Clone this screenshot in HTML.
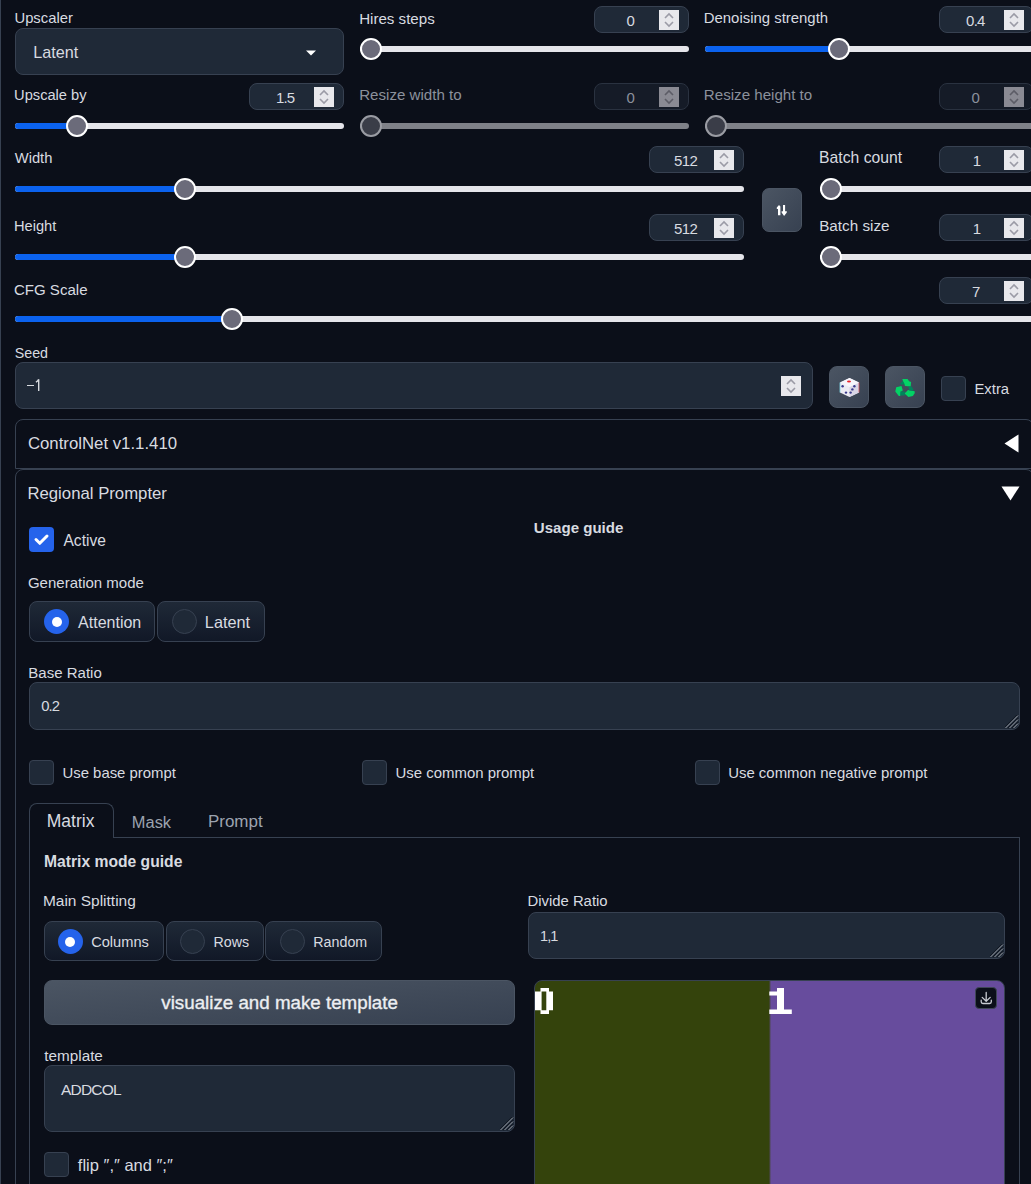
<!DOCTYPE html>
<html><head><meta charset="utf-8"><style>
html,body{margin:0;padding:0;width:1031px;height:1184px;overflow:hidden;background:#0b0f19;font-family:"Liberation Sans",sans-serif;}
</style></head><body>
<div style="position:absolute;left:0;top:0;width:1px;height:1184px;background:#374151"></div>
<div style="position:absolute;left:14.46px;top:11.37px;font-size:14.8px;line-height:14.8px;font-weight:normal;color:#d8dbe0;white-space:pre;letter-spacing:0px;transform:scaleY(1.0);transform-origin:0 12.53px;">Upscaler</div>
<div style="position:absolute;left:15px;top:28px;width:329px;height:47px;background:#1f2937;border:1px solid #374151;border-radius:8px;box-sizing:border-box;"></div>
<div style="position:absolute;left:33.17px;top:44.09px;font-size:16.2px;line-height:16.2px;font-weight:normal;color:#d8dbe0;white-space:pre;letter-spacing:0px;transform:scaleY(1.0);transform-origin:0 13.71px;">Latent</div>
<svg style="position:absolute;left:305px;top:50px" width="12" height="7" viewBox="0 0 12 7"><path d="M1 0.5 L11 0.5 L6 5.5 Z" fill="#fff"/></svg>
<div style="position:absolute;left:14.07px;top:88.18px;font-size:14.67px;line-height:14.67px;font-weight:normal;color:#d8dbe0;white-space:pre;letter-spacing:0px;transform:scaleY(1.0);transform-origin:0 12.42px;">Upscale by</div>
<div style="position:absolute;left:249px;top:83px;width:95px;height:27px;background:#1f2937;border:1px solid #374151;border-radius:8px;box-sizing:border-box;"></div>
<div style="position:absolute;left:276.06px;top:89.90px;font-size:15.0px;line-height:15.0px;font-weight:normal;color:#d8dbe0;white-space:pre;letter-spacing:-0.94px;transform:scaleY(1.0);transform-origin:0 12.70px;">1.5</div>
<svg style="position:absolute;left:314px;top:87px" width="20" height="20" viewBox="0 0 20 20"><rect width="20" height="20" fill="#e8e8ec"/><path d="M6 8 L10 4 L14 8 M6 12 L10 16 L14 12" fill="none" stroke="#9b9ba6" stroke-width="1.6"/></svg>
<div style="position:absolute;left:15px;top:123px;width:329px;height:6px;background:#e5e5ea;border-radius:3px"></div>
<div style="position:absolute;left:15px;top:123px;width:62px;height:6px;background:#0b62ee;border-radius:3px 0 0 3px"></div>
<div style="position:absolute;left:66px;top:115px;width:22px;height:22px;background:#6b6b7a;border:2px solid #ffffff;border-radius:50%;box-sizing:border-box"></div>
<div style="position:absolute;left:359.16px;top:10.51px;font-size:15.11px;line-height:15.11px;font-weight:normal;color:#d8dbe0;white-space:pre;letter-spacing:0px;transform:scaleY(1.0);transform-origin:0 12.79px;">Hires steps</div>
<div style="position:absolute;left:594px;top:6px;width:95px;height:27px;background:#1f2937;border:1px solid #374151;border-radius:8px;box-sizing:border-box;"></div>
<div style="position:absolute;left:626.42px;top:12.90px;font-size:15.0px;line-height:15.0px;font-weight:normal;color:#d8dbe0;white-space:pre;letter-spacing:0px;transform:scaleY(1.0);transform-origin:0 12.70px;">0</div>
<svg style="position:absolute;left:659px;top:10px" width="20" height="20" viewBox="0 0 20 20"><rect width="20" height="20" fill="#e8e8ec"/><path d="M6 8 L10 4 L14 8 M6 12 L10 16 L14 12" fill="none" stroke="#9b9ba6" stroke-width="1.6"/></svg>
<div style="position:absolute;left:360px;top:46px;width:329px;height:6px;background:#e5e5ea;border-radius:3px"></div>
<div style="position:absolute;left:360px;top:38px;width:22px;height:22px;background:#6b6b7a;border:2px solid #ffffff;border-radius:50%;box-sizing:border-box"></div>
<div style="position:absolute;left:359.16px;top:87.19px;font-size:15.13px;line-height:15.13px;font-weight:normal;color:#8b919c;white-space:pre;letter-spacing:0px;transform:scaleY(1.0);transform-origin:0 12.81px;">Resize width to</div>
<div style="position:absolute;left:594px;top:83px;width:95px;height:27px;background:#151b27;border:1px solid #2a3240;border-radius:8px;box-sizing:border-box;"></div>
<div style="position:absolute;left:626.42px;top:89.90px;font-size:15.0px;line-height:15.0px;font-weight:normal;color:#8b919c;white-space:pre;letter-spacing:0px;transform:scaleY(1.0);transform-origin:0 12.70px;">0</div>
<svg style="position:absolute;left:659px;top:87px" width="20" height="20" viewBox="0 0 20 20"><rect width="20" height="20" fill="#8a8a93"/><path d="M6 8 L10 4 L14 8 M6 12 L10 16 L14 12" fill="none" stroke="#5c5c66" stroke-width="1.6"/></svg>
<div style="position:absolute;left:360px;top:123px;width:329px;height:6px;background:#7f8188;border-radius:3px"></div>
<div style="position:absolute;left:360px;top:115px;width:22px;height:22px;background:#3a3d48;border:2px solid #9a9ca3;border-radius:50%;box-sizing:border-box"></div>
<div style="position:absolute;left:703.78px;top:11.17px;font-size:14.92px;line-height:14.92px;font-weight:normal;color:#d8dbe0;white-space:pre;letter-spacing:0px;transform:scaleY(1.0);transform-origin:0 12.63px;">Denoising strength</div>
<div style="position:absolute;left:939px;top:6px;width:95px;height:27px;background:#1f2937;border:1px solid #374151;border-radius:8px;box-sizing:border-box;"></div>
<div style="position:absolute;left:966.11px;top:12.90px;font-size:15.0px;line-height:15.0px;font-weight:normal;color:#d8dbe0;white-space:pre;letter-spacing:-0.81px;transform:scaleY(1.0);transform-origin:0 12.70px;">0.4</div>
<svg style="position:absolute;left:1004px;top:10px" width="20" height="20" viewBox="0 0 20 20"><rect width="20" height="20" fill="#e8e8ec"/><path d="M6 8 L10 4 L14 8 M6 12 L10 16 L14 12" fill="none" stroke="#9b9ba6" stroke-width="1.6"/></svg>
<div style="position:absolute;left:705px;top:46px;width:329px;height:6px;background:#e5e5ea;border-radius:3px"></div>
<div style="position:absolute;left:705px;top:46px;width:134px;height:6px;background:#0b62ee;border-radius:3px 0 0 3px"></div>
<div style="position:absolute;left:828px;top:38px;width:22px;height:22px;background:#6b6b7a;border:2px solid #ffffff;border-radius:50%;box-sizing:border-box"></div>
<div style="position:absolute;left:703.86px;top:87.11px;font-size:15.11px;line-height:15.11px;font-weight:normal;color:#8b919c;white-space:pre;letter-spacing:0px;transform:scaleY(1.0);transform-origin:0 12.79px;">Resize height to</div>
<div style="position:absolute;left:939px;top:83px;width:95px;height:27px;background:#151b27;border:1px solid #2a3240;border-radius:8px;box-sizing:border-box;"></div>
<div style="position:absolute;left:971.42px;top:89.90px;font-size:15.0px;line-height:15.0px;font-weight:normal;color:#8b919c;white-space:pre;letter-spacing:0px;transform:scaleY(1.0);transform-origin:0 12.70px;">0</div>
<svg style="position:absolute;left:1004px;top:87px" width="20" height="20" viewBox="0 0 20 20"><rect width="20" height="20" fill="#8a8a93"/><path d="M6 8 L10 4 L14 8 M6 12 L10 16 L14 12" fill="none" stroke="#5c5c66" stroke-width="1.6"/></svg>
<div style="position:absolute;left:705px;top:123px;width:329px;height:6px;background:#7f8188;border-radius:3px"></div>
<div style="position:absolute;left:705px;top:115px;width:22px;height:22px;background:#3a3d48;border:2px solid #9a9ca3;border-radius:50%;box-sizing:border-box"></div>
<div style="position:absolute;left:14.73px;top:151.41px;font-size:14.76px;line-height:14.76px;font-weight:normal;color:#d8dbe0;white-space:pre;letter-spacing:0px;transform:scaleY(1.0);transform-origin:0 12.49px;">Width</div>
<div style="position:absolute;left:649px;top:146px;width:95px;height:27px;background:#1f2937;border:1px solid #374151;border-radius:8px;box-sizing:border-box;"></div>
<div style="position:absolute;left:674.0px;top:152.90px;font-size:15.0px;line-height:15.0px;font-weight:normal;color:#d8dbe0;white-space:pre;letter-spacing:-0.63px;transform:scaleY(1.0);transform-origin:0 12.70px;">512</div>
<svg style="position:absolute;left:714px;top:150px" width="20" height="20" viewBox="0 0 20 20"><rect width="20" height="20" fill="#e8e8ec"/><path d="M6 8 L10 4 L14 8 M6 12 L10 16 L14 12" fill="none" stroke="#9b9ba6" stroke-width="1.6"/></svg>
<div style="position:absolute;left:15px;top:186px;width:729px;height:6px;background:#e5e5ea;border-radius:3px"></div>
<div style="position:absolute;left:15px;top:186px;width:170px;height:6px;background:#0b62ee;border-radius:3px 0 0 3px"></div>
<div style="position:absolute;left:174px;top:178px;width:22px;height:22px;background:#6b6b7a;border:2px solid #ffffff;border-radius:50%;box-sizing:border-box"></div>
<div style="position:absolute;left:13.9px;top:219.38px;font-size:14.67px;line-height:14.67px;font-weight:normal;color:#d8dbe0;white-space:pre;letter-spacing:0px;transform:scaleY(1.0);transform-origin:0 12.42px;">Height</div>
<div style="position:absolute;left:649px;top:214px;width:95px;height:27px;background:#1f2937;border:1px solid #374151;border-radius:8px;box-sizing:border-box;"></div>
<div style="position:absolute;left:674.0px;top:220.90px;font-size:15.0px;line-height:15.0px;font-weight:normal;color:#d8dbe0;white-space:pre;letter-spacing:-0.63px;transform:scaleY(1.0);transform-origin:0 12.70px;">512</div>
<svg style="position:absolute;left:714px;top:218px" width="20" height="20" viewBox="0 0 20 20"><rect width="20" height="20" fill="#e8e8ec"/><path d="M6 8 L10 4 L14 8 M6 12 L10 16 L14 12" fill="none" stroke="#9b9ba6" stroke-width="1.6"/></svg>
<div style="position:absolute;left:15px;top:253.5px;width:729px;height:6px;background:#e5e5ea;border-radius:3px"></div>
<div style="position:absolute;left:15px;top:253.5px;width:170px;height:6px;background:#0b62ee;border-radius:3px 0 0 3px"></div>
<div style="position:absolute;left:174px;top:245.5px;width:22px;height:22px;background:#6b6b7a;border:2px solid #ffffff;border-radius:50%;box-sizing:border-box"></div>
<div style="position:absolute;left:762px;top:188px;width:40px;height:44px;background:linear-gradient(to bottom right,#4b5563,#374151);border:1px solid #4b5563;border-radius:7px;box-sizing:border-box"></div>
<svg style="position:absolute;left:772px;top:200px" width="20" height="20" viewBox="0 0 20 20"><path fill="#fff" d="M6 15.2 V9 H4.8 V7.6 L7 5 L8.4 6.6 V15.2 Z M11 5 H13.1 V11.2 H14.8 V12.4 L12.1 16 L9.6 12.4 V11.2 H11 Z"/></svg>
<div style="position:absolute;left:819.11px;top:150.49px;font-size:15.72px;line-height:15.72px;font-weight:normal;color:#d8dbe0;white-space:pre;letter-spacing:0px;transform:scaleY(1.0);transform-origin:0 13.31px;">Batch count</div>
<div style="position:absolute;left:939px;top:146px;width:95px;height:27px;background:#1f2937;border:1px solid #374151;border-radius:8px;box-sizing:border-box;"></div>
<div style="position:absolute;left:972.81px;top:152.90px;font-size:15.0px;line-height:15.0px;font-weight:normal;color:#d8dbe0;white-space:pre;letter-spacing:0px;transform:scaleY(1.0);transform-origin:0 12.70px;">1</div>
<svg style="position:absolute;left:1004px;top:150px" width="20" height="20" viewBox="0 0 20 20"><rect width="20" height="20" fill="#e8e8ec"/><path d="M6 8 L10 4 L14 8 M6 12 L10 16 L14 12" fill="none" stroke="#9b9ba6" stroke-width="1.6"/></svg>
<div style="position:absolute;left:820px;top:186px;width:214px;height:6px;background:#e5e5ea;border-radius:3px"></div>
<div style="position:absolute;left:820px;top:178px;width:22px;height:22px;background:#6b6b7a;border:2px solid #ffffff;border-radius:50%;box-sizing:border-box"></div>
<div style="position:absolute;left:819.15px;top:218.47px;font-size:15.27px;line-height:15.27px;font-weight:normal;color:#d8dbe0;white-space:pre;letter-spacing:0px;transform:scaleY(1.0);transform-origin:0 12.93px;">Batch size</div>
<div style="position:absolute;left:939px;top:214px;width:95px;height:27px;background:#1f2937;border:1px solid #374151;border-radius:8px;box-sizing:border-box;"></div>
<div style="position:absolute;left:972.81px;top:220.90px;font-size:15.0px;line-height:15.0px;font-weight:normal;color:#d8dbe0;white-space:pre;letter-spacing:0px;transform:scaleY(1.0);transform-origin:0 12.70px;">1</div>
<svg style="position:absolute;left:1004px;top:218px" width="20" height="20" viewBox="0 0 20 20"><rect width="20" height="20" fill="#e8e8ec"/><path d="M6 8 L10 4 L14 8 M6 12 L10 16 L14 12" fill="none" stroke="#9b9ba6" stroke-width="1.6"/></svg>
<div style="position:absolute;left:820px;top:253.5px;width:214px;height:6px;background:#e5e5ea;border-radius:3px"></div>
<div style="position:absolute;left:820px;top:245.5px;width:22px;height:22px;background:#6b6b7a;border:2px solid #ffffff;border-radius:50%;box-sizing:border-box"></div>
<div style="position:absolute;left:13.93px;top:282.35px;font-size:15.06px;line-height:15.06px;font-weight:normal;color:#d8dbe0;white-space:pre;letter-spacing:0px;transform:scaleY(1.0);transform-origin:0 12.75px;">CFG Scale</div>
<div style="position:absolute;left:939px;top:277px;width:95px;height:27px;background:#1f2937;border:1px solid #374151;border-radius:8px;box-sizing:border-box;"></div>
<div style="position:absolute;left:971.94px;top:283.90px;font-size:15.0px;line-height:15.0px;font-weight:normal;color:#d8dbe0;white-space:pre;letter-spacing:0px;transform:scaleY(1.0);transform-origin:0 12.70px;">7</div>
<svg style="position:absolute;left:1004px;top:281px" width="20" height="20" viewBox="0 0 20 20"><rect width="20" height="20" fill="#e8e8ec"/><path d="M6 8 L10 4 L14 8 M6 12 L10 16 L14 12" fill="none" stroke="#9b9ba6" stroke-width="1.6"/></svg>
<div style="position:absolute;left:15px;top:316px;width:1019px;height:6px;background:#e5e5ea;border-radius:3px"></div>
<div style="position:absolute;left:15px;top:316px;width:217px;height:6px;background:#0b62ee;border-radius:3px 0 0 3px"></div>
<div style="position:absolute;left:221px;top:308px;width:22px;height:22px;background:#6b6b7a;border:2px solid #ffffff;border-radius:50%;box-sizing:border-box"></div>
<div style="position:absolute;left:14.74px;top:345.54px;font-size:14.25px;line-height:14.25px;font-weight:normal;color:#d8dbe0;white-space:pre;letter-spacing:0px;transform:scaleY(1.0);transform-origin:0 12.06px;">Seed</div>
<div style="position:absolute;left:15px;top:362px;width:798px;height:47px;background:#1f2937;border:1px solid #374151;border-radius:8px;box-sizing:border-box;"></div>
<div style="position:absolute;left:26.6px;top:384.6px;width:7.6px;height:1.3px;background:#d8dbe0"></div>
<svg style="position:absolute;left:30px;top:375px" width="14" height="20" viewBox="0 0 14 20"><path d="M8.7 4.3 V16 M5.9 7.2 Q7.8 6.4 8.7 4.3" fill="none" stroke="#d8dbe0" stroke-width="1.4"/></svg>
<svg style="position:absolute;left:781px;top:376px" width="20" height="20" viewBox="0 0 20 20"><rect width="20" height="20" fill="#e8e8ec"/><path d="M6 8 L10 4 L14 8 M6 12 L10 16 L14 12" fill="none" stroke="#9b9ba6" stroke-width="1.6"/></svg>
<div style="position:absolute;left:829px;top:366px;width:40px;height:42px;background:linear-gradient(to bottom right,#4b5563,#374151);border:1px solid #4b5563;border-radius:8px;box-sizing:border-box"></div>
<div style="position:absolute;left:885px;top:366px;width:40px;height:42px;background:linear-gradient(to bottom right,#4b5563,#374151);border:1px solid #4b5563;border-radius:8px;box-sizing:border-box"></div>
<div style="position:absolute;left:941px;top:376px;width:25px;height:25px;background:#1f2937;border:1px solid #374151;border-radius:4px;box-sizing:border-box;"></div>
<div style="position:absolute;left:974.48px;top:382.05px;font-size:14.83px;line-height:14.83px;font-weight:normal;color:#d8dbe0;white-space:pre;letter-spacing:0px;transform:scaleY(1.0);transform-origin:0 12.55px;">Extra</div>
<svg style="position:absolute;left:829px;top:366px" width="40" height="42" viewBox="0 0 40 42">
<path d="M20.5 12 L30 16.5 L30 26.5 L20.5 31 L11 26.5 L11 16.5 Z" fill="#ecebf3"/>
<path d="M20.5 21 L30 16.5 L30 26.5 L20.5 31 Z" fill="#d9d6e6"/>
<path d="M20.5 12 L30 16.5 L20.5 21 L11 16.5 Z" fill="#f6f5fb"/>
<ellipse cx="20" cy="15.6" rx="2" ry="1" fill="#e8232b"/>
<g fill="#3a3a8c"><circle cx="13.6" cy="20.3" r="1.2"/><circle cx="17" cy="26.6" r="1.2"/>
<circle cx="21.6" cy="26.6" r="1.2"/><circle cx="23.4" cy="23.4" r="1.2"/><circle cx="25.4" cy="20.2" r="1.2"/></g>
<path d="M11 16.5 L11 26.5" stroke="#7fd6e6" stroke-width="0.8"/><path d="M30 16.5 L30 26.5" stroke="#d4505a" stroke-width="0.8"/>
</svg>
<svg style="position:absolute;left:893px;top:374px;filter:blur(0.3px)" width="26" height="26" viewBox="0 0 26 26">
<g fill="#03d265">
<path d="M9.3 5.1 L14.6 5.1 L16.1 7.3 L18.1 8.1 L17.7 12.6 L12.1 11.9 L10.5 8.4 Z"/>
<path d="M3.2 13.2 L8.5 12 L9.8 16.5 L8.2 17.4 L7.3 21.9 L5.8 21.9 L2.3 17.5 Z"/>
<path d="M11.6 19.4 L15 16.1 L21.7 17.2 L21.7 19.3 L19.8 22 L15.4 22.9 Z"/>
</g>
<g fill="#00845b">
<path d="M6.8 10.6 L9.6 6.8 L11.9 10.6 Z"/>
<path d="M7.3 17.6 L11.9 17.4 L11.8 21.4 L7.3 21.4 Z"/>
<path d="M15.2 12.6 L18.7 12.4 L20.8 16.6 L16.3 16.6 Z"/>
</g></svg>
<div style="position:absolute;left:15px;top:419px;width:1019px;height:50px;border:1px solid #374151;border-radius:8px 8px 0 0;box-sizing:border-box;border-bottom-width:1px"></div>
<div style="position:absolute;left:27.94px;top:436.20px;font-size:16.77px;line-height:16.77px;font-weight:normal;color:#d8dbe0;white-space:pre;letter-spacing:0px;transform:scaleY(1.0);transform-origin:0 14.20px;">ControlNet v1.1.410</div>
<svg style="position:absolute;left:1004px;top:434px" width="15" height="19" viewBox="0 0 15 19"><path d="M14.5 0.5 L14.5 18.5 L0.5 9.5 Z" fill="#fff"/></svg>
<div style="position:absolute;left:15px;top:469px;width:1019px;height:800px;border:1px solid #374151;border-radius:8px 8px 0 0;box-sizing:border-box"></div>
<div style="position:absolute;left:27.43px;top:486.03px;font-size:16.74px;line-height:16.74px;font-weight:normal;color:#d8dbe0;white-space:pre;letter-spacing:0px;transform:scaleY(1.0);transform-origin:0 14.17px;">Regional Prompter</div>
<svg style="position:absolute;left:1001px;top:486px" width="19" height="15" viewBox="0 0 19 15"><path d="M0.5 0.5 L18.5 0.5 L9.5 14.5 Z" fill="#fff"/></svg>
<svg style="position:absolute;left:29px;top:527px" width="25" height="25" viewBox="0 0 25 25"><rect x="0" y="0" width="25" height="25" rx="4" fill="#2563eb"/><path d="M7 12.5 L10.8 16.3 L18 9" fill="none" stroke="#fff" stroke-width="3" stroke-linecap="round" stroke-linejoin="round"/></svg>
<div style="position:absolute;left:63.47px;top:533.01px;font-size:15.58px;line-height:15.58px;font-weight:normal;color:#d8dbe0;white-space:pre;letter-spacing:0px;transform:scaleY(1.0);transform-origin:0 13.19px;">Active</div>
<div style="position:absolute;left:533.8px;top:519.74px;font-size:15.07px;line-height:15.07px;font-weight:bold;color:#d8dbe0;white-space:pre;letter-spacing:0px;transform:scaleY(1.0);transform-origin:0 12.76px;">Usage guide</div>
<div style="position:absolute;left:27.95px;top:575.40px;font-size:15.0px;line-height:15.0px;font-weight:normal;color:#d8dbe0;white-space:pre;letter-spacing:0px;transform:scaleY(1.0);transform-origin:0 12.70px;">Generation mode</div>
<div style="position:absolute;left:29px;top:601px;width:126px;height:41px;background:linear-gradient(to bottom,#1f2937,#111827);border:1px solid #374151;border-radius:8px;box-sizing:border-box"></div>
<div style="position:absolute;left:44.0px;top:609.0px;width:25px;height:25px;border-radius:50%;background:#2563eb"></div>
<div style="position:absolute;left:51.5px;top:616.5px;width:10px;height:10px;border-radius:50%;background:#fff"></div>
<div style="position:absolute;left:78.07px;top:614.03px;font-size:16.03px;line-height:16.03px;font-weight:normal;color:#d8dbe0;white-space:pre;letter-spacing:0px;transform:scaleY(1.0);transform-origin:0 13.57px;">Attention</div>
<div style="position:absolute;left:157px;top:601px;width:108px;height:41px;background:linear-gradient(to bottom,#1f2937,#111827);border:1px solid #374151;border-radius:8px;box-sizing:border-box"></div>
<div style="position:absolute;left:171.5px;top:609.0px;width:25px;height:25px;border-radius:50%;background:#1f2937;border:1px solid #374151;box-sizing:border-box"></div>
<div style="position:absolute;left:204.87px;top:613.82px;font-size:16.28px;line-height:16.28px;font-weight:normal;color:#d8dbe0;white-space:pre;letter-spacing:0px;transform:scaleY(1.0);transform-origin:0 13.78px;">Latent</div>
<div style="position:absolute;left:28.37px;top:664.69px;font-size:15.02px;line-height:15.02px;font-weight:normal;color:#d8dbe0;white-space:pre;letter-spacing:0px;transform:scaleY(1.0);transform-origin:0 12.71px;">Base Ratio</div>
<div style="position:absolute;left:29px;top:682px;width:991px;height:48px;background:#1f2937;border:1px solid #374151;border-radius:8px;box-sizing:border-box;"></div>
<div style="position:absolute;left:41.22px;top:699.07px;font-size:14.8px;line-height:14.8px;font-weight:normal;color:#d8dbe0;white-space:pre;letter-spacing:-0.93px;transform:scaleY(1.0);transform-origin:0 12.53px;">0.2</div>
<svg style="position:absolute;left:1005px;top:715px" width="14" height="14" viewBox="0 0 14 14"><g stroke="#0f1520" stroke-width="1.1"><path d="M13 -0.7 L-0.7 13"/><path d="M13 3.3 L3.3 13"/><path d="M13 7.3 L7.3 13"/></g><g stroke="#a3a9b2" stroke-width="1"><path d="M13 0.5 L0.5 13"/><path d="M13 4.5 L4.5 13"/><path d="M13 8.5 L8.5 13"/></g></svg>
<div style="position:absolute;left:29px;top:760px;width:25px;height:25px;background:#1f2937;border:1px solid #374151;border-radius:4px;box-sizing:border-box;"></div>
<div style="position:absolute;left:62.45px;top:765.98px;font-size:14.91px;line-height:14.91px;font-weight:normal;color:#d8dbe0;white-space:pre;letter-spacing:0px;transform:scaleY(1.0);transform-origin:0 12.62px;">Use base prompt</div>
<div style="position:absolute;left:362px;top:760px;width:25px;height:25px;background:#1f2937;border:1px solid #374151;border-radius:4px;box-sizing:border-box;"></div>
<div style="position:absolute;left:395.55px;top:765.94px;font-size:14.95px;line-height:14.95px;font-weight:normal;color:#d8dbe0;white-space:pre;letter-spacing:0px;transform:scaleY(1.0);transform-origin:0 12.66px;">Use common prompt</div>
<div style="position:absolute;left:695px;top:760px;width:25px;height:25px;background:#1f2937;border:1px solid #374151;border-radius:4px;box-sizing:border-box;"></div>
<div style="position:absolute;left:728.15px;top:765.95px;font-size:14.94px;line-height:14.94px;font-weight:normal;color:#d8dbe0;white-space:pre;letter-spacing:0px;transform:scaleY(1.0);transform-origin:0 12.65px;">Use common negative prompt</div>
<div style="position:absolute;left:29px;top:837px;width:991px;height:400px;border:1px solid #374151;border-top:1px solid #374151;box-sizing:border-box"></div>
<div style="position:absolute;left:29px;top:803px;width:85px;height:35px;border:1px solid #374151;border-bottom:none;border-radius:8px 8px 0 0;background:#0b0f19;box-sizing:border-box"></div>
<div style="position:absolute;left:46.77px;top:812.79px;font-size:17.5px;line-height:17.5px;font-weight:normal;color:#d8dbe0;white-space:pre;letter-spacing:0px;transform:scaleY(1.0);transform-origin:0 14.81px;">Matrix</div>
<div style="position:absolute;left:131.85px;top:813.70px;font-size:16.42px;line-height:16.42px;font-weight:normal;color:#9ca3af;white-space:pre;letter-spacing:0px;transform:scaleY(1.0);transform-origin:0 13.90px;">Mask</div>
<div style="position:absolute;left:207.91px;top:813.20px;font-size:17.01px;line-height:17.01px;font-weight:normal;color:#9ca3af;white-space:pre;letter-spacing:0px;transform:scaleY(1.0);transform-origin:0 14.40px;">Prompt</div>
<div style="position:absolute;left:43.95px;top:853.53px;font-size:15.68px;line-height:15.68px;font-weight:bold;color:#d8dbe0;white-space:pre;letter-spacing:0px;transform:scaleY(1.0);transform-origin:0 13.27px;">Matrix mode guide</div>
<div style="position:absolute;left:42.93px;top:892.70px;font-size:15.47px;line-height:15.47px;font-weight:normal;color:#d8dbe0;white-space:pre;letter-spacing:0px;transform:scaleY(1.0);transform-origin:0 13.10px;">Main Splitting</div>
<div style="position:absolute;left:44px;top:921px;width:120px;height:40px;background:linear-gradient(to bottom,#1f2937,#111827);border:1px solid #374151;border-radius:8px;box-sizing:border-box"></div>
<div style="position:absolute;left:57.8px;top:929.0px;width:25px;height:25px;border-radius:50%;background:#2563eb"></div>
<div style="position:absolute;left:65.3px;top:936.5px;width:10px;height:10px;border-radius:50%;background:#fff"></div>
<div style="position:absolute;left:91.15px;top:934.51px;font-size:14.64px;line-height:14.64px;font-weight:normal;color:#d8dbe0;white-space:pre;letter-spacing:0px;transform:scaleY(1.0);transform-origin:0 12.39px;">Columns</div>
<div style="position:absolute;left:166px;top:921px;width:98px;height:40px;background:linear-gradient(to bottom,#1f2937,#111827);border:1px solid #374151;border-radius:8px;box-sizing:border-box"></div>
<div style="position:absolute;left:179.8px;top:929.0px;width:25px;height:25px;border-radius:50%;background:#1f2937;border:1px solid #374151;box-sizing:border-box"></div>
<div style="position:absolute;left:213.53px;top:934.85px;font-size:14.23px;line-height:14.23px;font-weight:normal;color:#d8dbe0;white-space:pre;letter-spacing:0px;transform:scaleY(1.0);transform-origin:0 12.05px;">Rows</div>
<div style="position:absolute;left:265px;top:921px;width:117px;height:40px;background:linear-gradient(to bottom,#1f2937,#111827);border:1px solid #374151;border-radius:8px;box-sizing:border-box"></div>
<div style="position:absolute;left:280.3px;top:929.0px;width:25px;height:25px;border-radius:50%;background:#1f2937;border:1px solid #374151;box-sizing:border-box"></div>
<div style="position:absolute;left:313.33px;top:934.83px;font-size:14.26px;line-height:14.26px;font-weight:normal;color:#d8dbe0;white-space:pre;letter-spacing:0px;transform:scaleY(1.0);transform-origin:0 12.07px;">Random</div>
<div style="position:absolute;left:527.48px;top:893.51px;font-size:14.87px;line-height:14.87px;font-weight:normal;color:#d8dbe0;white-space:pre;letter-spacing:0px;transform:scaleY(1.0);transform-origin:0 12.59px;">Divide Ratio</div>
<div style="position:absolute;left:528px;top:912px;width:477px;height:47px;background:#1f2937;border:1px solid #374151;border-radius:8px;box-sizing:border-box;"></div>
<div style="position:absolute;left:540.1px;top:929.13px;font-size:14.5px;line-height:14.5px;font-weight:normal;color:#d8dbe0;white-space:pre;letter-spacing:-0.92px;transform:scaleY(1.0);transform-origin:0 12.27px;">1,1</div>
<svg style="position:absolute;left:990px;top:944px" width="14" height="14" viewBox="0 0 14 14"><g stroke="#0f1520" stroke-width="1.1"><path d="M13 -0.7 L-0.7 13"/><path d="M13 3.3 L3.3 13"/><path d="M13 7.3 L7.3 13"/></g><g stroke="#a3a9b2" stroke-width="1"><path d="M13 0.5 L0.5 13"/><path d="M13 4.5 L4.5 13"/><path d="M13 8.5 L8.5 13"/></g></svg>
<div style="position:absolute;left:44px;top:980px;width:471px;height:45px;background:linear-gradient(to bottom right,#4b5563,#374151);border:1px solid #4b5563;border-radius:8px;box-sizing:border-box"></div>
<div style="position:absolute;left:161.32px;top:994.23px;font-size:18.75px;line-height:18.75px;font-weight:normal;color:#eceef1;white-space:pre;letter-spacing:0px;transform:scaleY(1.0);transform-origin:0 15.87px;-webkit-text-stroke:0.35px #eceef1;">visualize and make template</div>
<div style="position:absolute;left:44.37px;top:1047.89px;font-size:15.25px;line-height:15.25px;font-weight:normal;color:#d8dbe0;white-space:pre;letter-spacing:0px;transform:scaleY(1.0);transform-origin:0 12.91px;">template</div>
<div style="position:absolute;left:44px;top:1065px;width:471px;height:67px;background:#1f2937;border:1px solid #374151;border-radius:8px;box-sizing:border-box;"></div>
<div style="position:absolute;left:60.97px;top:1081.68px;font-size:15.5px;line-height:15.5px;font-weight:normal;color:#d8dbe0;white-space:pre;letter-spacing:-0.81px;transform:scaleY(1.0);transform-origin:0 13.12px;">ADDCOL</div>
<svg style="position:absolute;left:500px;top:1117px" width="14" height="14" viewBox="0 0 14 14"><g stroke="#0f1520" stroke-width="1.1"><path d="M13 -0.7 L-0.7 13"/><path d="M13 3.3 L3.3 13"/><path d="M13 7.3 L7.3 13"/></g><g stroke="#a3a9b2" stroke-width="1"><path d="M13 0.5 L0.5 13"/><path d="M13 4.5 L4.5 13"/><path d="M13 8.5 L8.5 13"/></g></svg>
<div style="position:absolute;left:44px;top:1152px;width:25px;height:25px;background:#1f2937;border:1px solid #374151;border-radius:4px;box-sizing:border-box;"></div>
<div style="position:absolute;left:77.87px;top:1156.92px;font-size:16.51px;line-height:16.51px;font-weight:normal;color:#d8dbe0;white-space:pre;letter-spacing:0px;transform:scaleY(1.0);transform-origin:0 13.98px;">flip ″,″ and ″;″</div>
<div style="position:absolute;left:534px;top:980px;width:471px;height:300px;border-radius:8px;overflow:hidden;border:1px solid #374151;box-sizing:border-box;background:linear-gradient(to right,#34430c 0,#34430c 234px,#674c9d 236px,#674c9d 100%)"></div>
<svg style="position:absolute;left:530px;top:980px;filter:blur(0.35px)" width="30" height="40" viewBox="0 0 30 40"><path fill="#fff" d="M10.5 8 H19 V11.5 H23 V30.3 H19 V34 H10.5 V30.3 H5 V11.5 H10.5 Z M11.6 11.6 V30.3 H16.3 V11.6 Z" fill-rule="evenodd"/></svg>
<svg style="position:absolute;left:760px;top:980px;filter:blur(0.35px)" width="40" height="40" viewBox="0 0 40 40"><path fill="#fff" d="M17 8 H24 V29.5 H31.8 V34 H9.3 V29.5 H17 V15.5 H9.3 V11.6 H17 Z"/></svg>
<div style="position:absolute;left:975px;top:987px;width:22px;height:22px;background:#0b0f19;border:1px solid #3f4756;border-radius:4px;box-sizing:border-box"></div>
<svg style="position:absolute;left:975px;top:987px" width="22" height="22" viewBox="0 0 22 22"><path d="M11.2 5.5 V14.2 M7.2 10.4 L11.2 14.3 L15.2 10.4 M6.2 13.2 V14.8 Q6.2 16.5 7.9 16.5 H14.6 Q16.3 16.5 16.3 14.8 V13.2" fill="none" stroke="#c9ccd3" stroke-width="1.3" stroke-linecap="round" stroke-linejoin="round"/></svg>
</body></html>
